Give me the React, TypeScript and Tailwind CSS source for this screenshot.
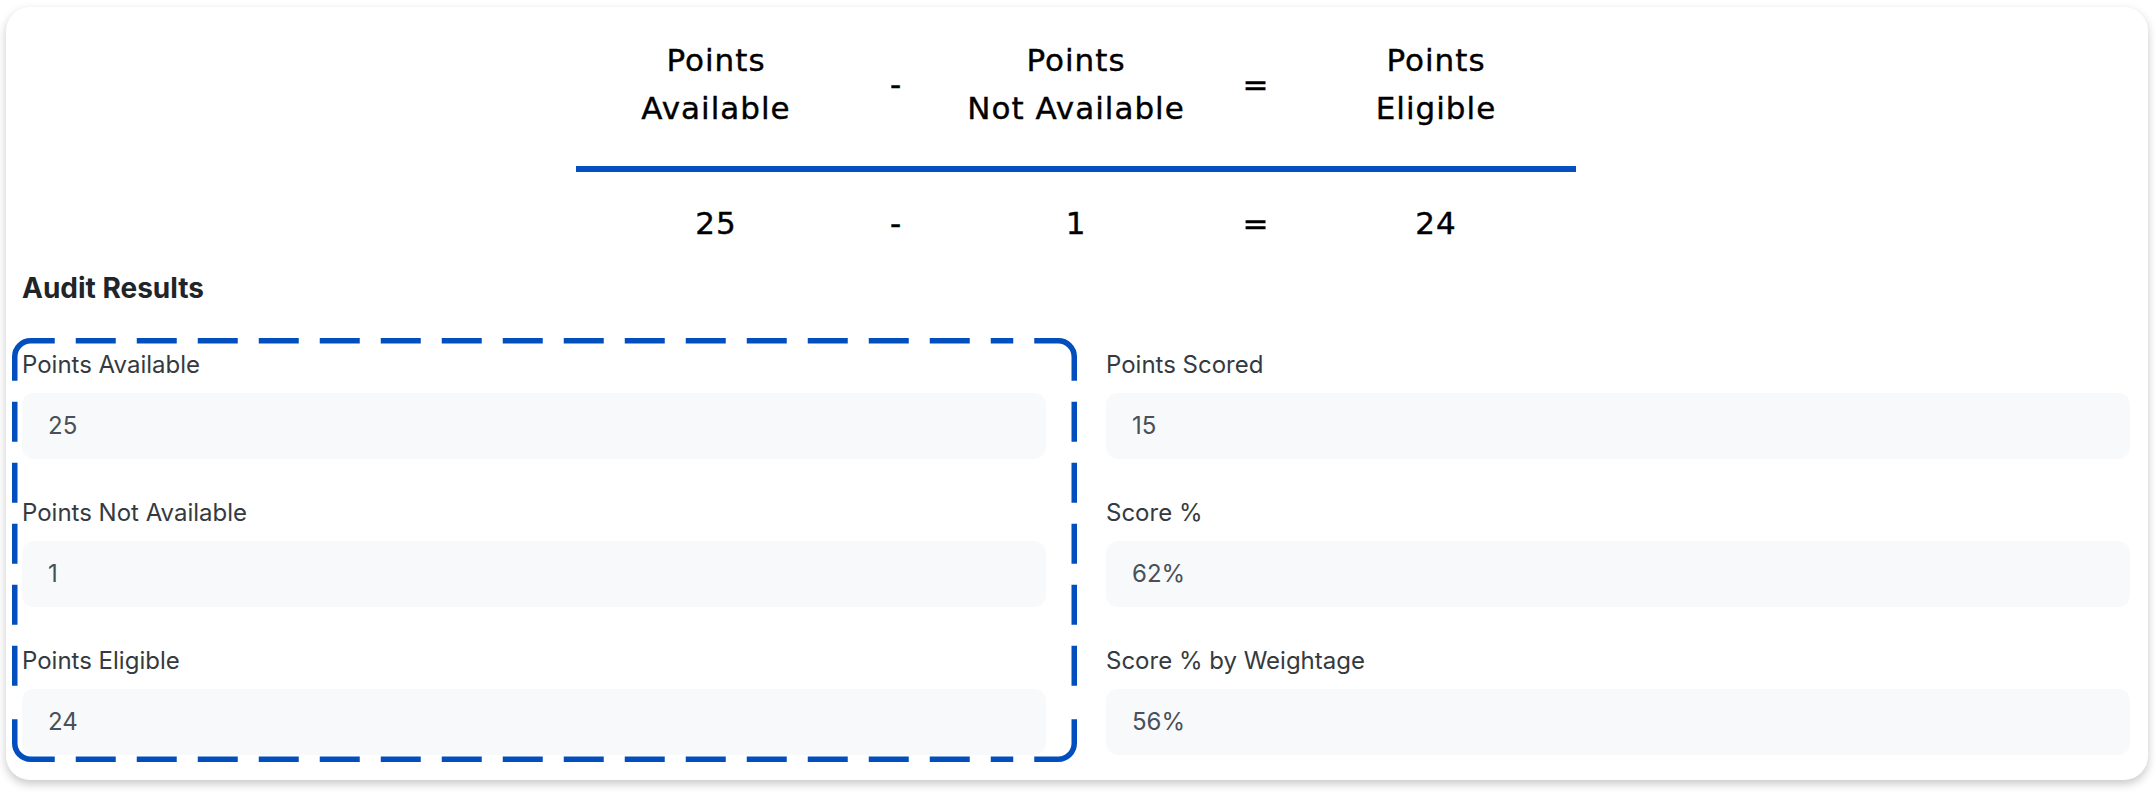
const fields = {
  left: [
    { label: 'Points Available', value: '25' },
    { label: 'Points Not Available', value: '1' },
    { label: 'Points Eligible', value: '24' },
  ],
  right: [
    { label: 'Points Scored', value: '15' },
    { label: 'Score %', value: '62%' },
    { label: 'Score % by Weightage', value: '56%' },
  ],
}

function Field({ label, value }: { label: string; value: string }) {
  return (
    <div className="flex flex-col">
      <label className="text-[24px] leading-[28px] text-[#343a40]">{label}</label>
      <div className="mt-[14px] h-[66px] rounded-xl bg-[#f8f9fa] pl-[26px] flex items-center text-[24px] text-[#495057]">
        {value}
      </div>
    </div>
  )
}

function Cell({ children }: { children: React.ReactNode }) {
  return <div className="flex flex-col items-center whitespace-nowrap">{children}</div>
}

// dashed highlight drawn around the left column
function DashedFrame() {
  const L = 2.75, T = 2.75, R = 1062.25, B = 421.25, r = 16, arm = 40, gap = 21
  const blue = '#034ebd'
  return (
    <svg
      className="absolute left-[-10px] top-[-13px] pointer-events-none"
      width="1065"
      height="424"
      viewBox="0 0 1065 424"
      fill="none"
      stroke={blue}
      strokeWidth="5.5"
    >
      <path d={`M${L} ${T + arm} V${T + r} A${r} ${r} 0 0 1 ${L + r} ${T} H${L + arm}`} />
      <path d={`M${R - arm} ${T} H${R - r} A${r} ${r} 0 0 1 ${R} ${T + r} V${T + arm}`} />
      <path d={`M${R} ${B - arm} V${B - r} A${r} ${r} 0 0 1 ${R - r} ${B} H${R - arm}`} />
      <path d={`M${L + arm} ${B} H${L + r} A${r} ${r} 0 0 1 ${L} ${B - r} V${B - arm}`} />
      <g strokeDasharray="40 21">
        <path d={`M${L + arm + gap} ${T} H${R - arm - gap}`} />
        <path d={`M${L + arm + gap} ${B} H${R - arm - gap}`} />
        <path d={`M${L} ${T + arm + gap} V${B - arm - gap}`} />
        <path d={`M${R} ${T + arm + gap} V${B - arm - gap}`} />
      </g>
    </svg>
  )
}

export default function App() {
  return (
    <div className="min-h-screen bg-white pt-[7px] pl-[6px] pr-[8px] font-['Inter',sans-serif]">
      <div className="rounded-3xl bg-white shadow-[0_4px_10px_rgba(0,0,0,0.22)] pt-[29px] pb-[25px] pl-[16px] pr-[18px]">
        {/* formula */}
        <div className="flex flex-col items-center font-['DejaVu_Sans',sans-serif] text-[31px] leading-[48px] tracking-[1px] text-black [-webkit-text-stroke:0.4px_black]">
          <div className="grid grid-cols-[180px_180px_180px_180px_180px] items-center">
            <Cell>
              <span>Points</span>
              <span>Available</span>
            </Cell>
            <Cell>-</Cell>
            <Cell>
              <span>Points</span>
              <span>Not Available</span>
            </Cell>
            <Cell>=</Cell>
            <Cell>
              <span>Points</span>
              <span>Eligible</span>
            </Cell>
          </div>
          <div className="w-[1000px] h-[6px] bg-[#0450be] mt-[34px]" />
          <div className="grid grid-cols-[180px_180px_180px_180px_180px] mt-[27px]">
            <Cell>25</Cell>
            <Cell>-</Cell>
            <Cell>1</Cell>
            <Cell>=</Cell>
            <Cell>24</Cell>
          </div>
        </div>

        <h2 className="mt-[25px] text-[28px] leading-[32px] font-bold text-[#212529]">Audit Results</h2>

        <div className="mt-[47px] grid grid-cols-2 gap-x-[60px]">
          <div className="relative flex flex-col gap-[40px]">
            <DashedFrame />
            {fields.left.map((f) => (
              <Field key={f.label} {...f} />
            ))}
          </div>
          <div className="flex flex-col gap-[40px]">
            {fields.right.map((f) => (
              <Field key={f.label} {...f} />
            ))}
          </div>
        </div>
      </div>
    </div>
  )
}
